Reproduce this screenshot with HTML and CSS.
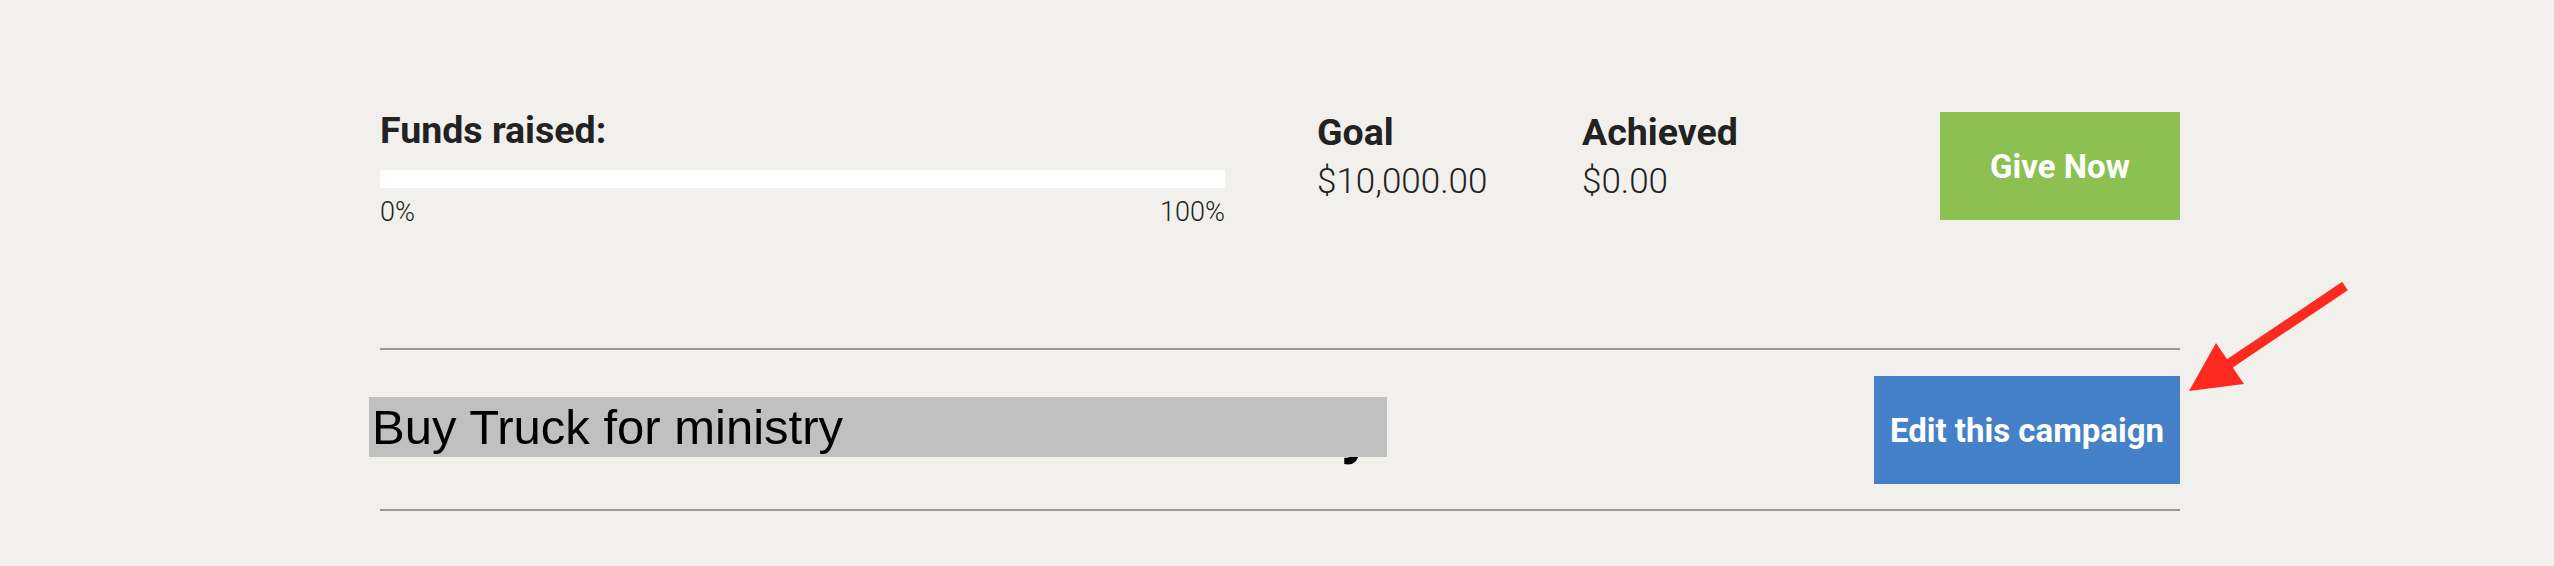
FILE: index.html
```html
<!DOCTYPE html>
<html lang="en">
<head>
<meta charset="utf-8">
<title>Campaign</title>
<link rel="stylesheet" href="styles.css">
</head>
<body>
<main class="page">
  <section class="stats">
    <div class="funds">
      <h3 class="label">Funds raised:</h3>
      <div class="bar"><div class="bar-fill" style="width:0%"></div></div>
      <div class="bar-scale"><span>0%</span><span>100%</span></div>
    </div>
    <div class="figure goal">
      <h3 class="label">Goal</h3>
      <div class="value">$10,000.00</div>
    </div>
    <div class="figure achieved">
      <h3 class="label">Achieved</h3>
      <div class="value">$0.00</div>
    </div>
    <a class="btn btn-give" href="#">Give Now</a>
  </section>
  <section class="campaign">
    <div class="title-wrap">
      <h2 class="title">Buy Truck for ministr<span class="title-tail">y</span></h2>
      <div class="title-edit">Buy Truck for ministry</div>
    </div>
    <a class="btn btn-edit" href="#">Edit this campaign</a>
  </section>
</main>
<svg class="arrow" viewBox="2180 270 180 130" width="180" height="130" aria-hidden="true">
  <line x1="2345" y1="286" x2="2226" y2="366" stroke="#fc2a1f" stroke-width="10"/>
  <polygon points="2189,391 2216,343 2244,384" fill="#fc2a1f"/>
</svg>
</body>
</html>
```
FILE: styles.css
```css
html, body {
  margin: 0;
  padding: 0;
}
body {
  background: #f1f0ec;
  font-family: Roboto, "Noto Sans", sans-serif;
  color: #222;
  position: relative;
  width: 2554px;
  height: 566px;
  overflow: hidden;
}
.page {
  width: 1800px;
  margin-left: 380px;
  padding-top: 109px;
}
.stats {
  display: flex;
  align-items: flex-start;
  height: 239px;
}
.label {
  margin: 0;
  font-size: 37.5px;
  line-height: 43px;
  font-weight: 700;
  color: #222;
}
.funds {
  width: 845px;
}
.bar {
  margin-top: 18px;
  height: 18px;
  background: #fff;
  border-radius: 2px;
  overflow: hidden;
}
.bar-fill {
  height: 100%;
  background: #8cc152;
}
.bar-scale {
  display: flex;
  justify-content: space-between;
  margin-top: 9px;
  font-size: 27px;
  line-height: 31px;
  font-weight: 300;
}
.figure {
  padding-top: 2px;
}
.goal {
  margin-left: 92px;
  width: 265px;
}
.value {
  margin-top: 8px;
  font-size: 35px;
  line-height: 40px;
  font-weight: 300;
}
.btn {
  display: flex;
  align-items: center;
  justify-content: center;
  height: 108px;
  color: #fff;
  font-weight: 700;
  font-size: 33px;
  text-decoration: none;
  box-sizing: border-box;
}
.btn-give {
  margin-left: auto;
  margin-top: 3px;
  width: 240px;
  background: #8cc152;
}
.campaign {
  display: flex;
  align-items: center;
  justify-content: space-between;
  border-top: 2px solid #999;
  border-bottom: 2px solid #999;
  padding: 26px 0 25px;
}
.title-wrap {
  position: relative;
  width: 1007px;
  height: 60px;
  margin-bottom: 6px;
}
.title {
  margin: 0;
  font-size: 60px;
  line-height: 70px;
  font-weight: 700;
  color: transparent;
  text-align: right;
  padding-right: 16px;
  white-space: nowrap;
}
.title-tail {
  color: #000;
}
.title-edit {
  position: absolute;
  left: -11px;
  top: 0;
  width: 1018px;
  height: 60px;
  box-sizing: border-box;
  padding-left: 3px;
  background: #c0c0c0;
  font-family: "Liberation Sans", Arial, sans-serif;
  font-size: 49px;
  line-height: 60px;
  color: #000;
  white-space: nowrap;
}
.btn-edit {
  width: 306px;
  background: #4581c8;
}
.arrow {
  position: absolute;
  left: 2180px;
  top: 270px;
}
```
